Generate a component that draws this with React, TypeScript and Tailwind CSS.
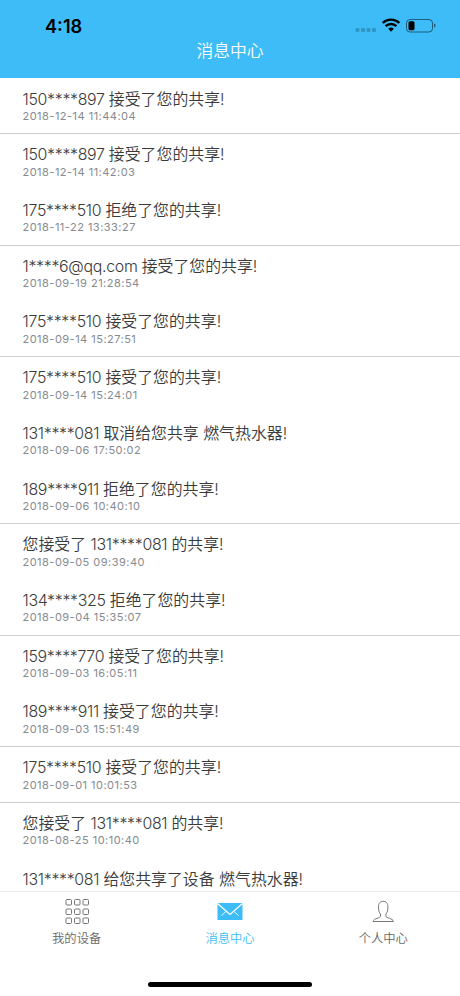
import clsx from "clsx";

const messages = [
  { account: "150****897", after: "接受了您的共享!", time: "2018-12-14 11:44:04", line: true },
  { account: "150****897", after: "接受了您的共享!", time: "2018-12-14 11:42:03" },
  { account: "175****510", after: "拒绝了您的共享!", time: "2018-11-22 13:33:27", line: true },
  { account: "1****6@qq.com", after: "接受了您的共享!", time: "2018-09-19 21:28:54" },
  { account: "175****510", after: "接受了您的共享!", time: "2018-09-14 15:27:51", line: true },
  { account: "175****510", after: "接受了您的共享!", time: "2018-09-14 15:24:01" },
  { account: "131****081", after: "取消给您共享 燃气热水器!", time: "2018-09-06 17:50:02" },
  { account: "189****911", after: "拒绝了您的共享!", time: "2018-09-06 10:40:10", line: true },
  { before: "您接受了", account: "131****081", after: "的共享!", time: "2018-09-05 09:39:40" },
  { account: "134****325", after: "拒绝了您的共享!", time: "2018-09-04 15:35:07", line: true },
  { account: "159****770", after: "接受了您的共享!", time: "2018-09-03 16:05:11" },
  { account: "189****911", after: "接受了您的共享!", time: "2018-09-03 15:51:49", line: true },
  { account: "175****510", after: "接受了您的共享!", time: "2018-09-01 10:01:53", line: true },
  { before: "您接受了", account: "131****081", after: "的共享!", time: "2018-08-25 10:10:40" },
  { account: "131****081", after: "给您共享了设备 燃气热水器!" },
];

const StatusIcons = () => {
  return (
    <svg width="84" height="18" viewBox="0 0 84 18" fill="none">
      <g fill="#000" fillOpacity="0.2">
        <rect x="1.500" y="13" width="4" height="4" rx="1" />
        <rect x="7" y="13" width="4" height="4" rx="1" />
        <rect x="12.500" y="13" width="4" height="4" rx="1" />
        <rect x="18" y="13" width="4" height="4" rx="1" />
      </g>
      <g stroke="#000" strokeWidth="2.4">
        <path d="M28.700 8a11.800 11.800 0 0 1 16.600 0" />
        <path d="M31.600 11.200a7.600 7.600 0 0 1 10.800 0" />
      </g>
      <path d="M34.200 13.800a4 4 0 0 1 5.600 0l-2.800 3z" fill="#000" />
      <rect x="52.500" y="4.500" width="26" height="12.500" rx="3.500" stroke="#000" strokeOpacity="0.5" />
      <rect x="54.500" y="6.300" width="6" height="9" rx="1.500" fill="#000" />
      <path d="M80 8.500c2 .6 2 3.400 0 4z" fill="#000" fillOpacity="0.5" />
    </svg>
  );
};

const Header = () => {
  return (
    <header className="h-[78px] shrink-0 bg-[#3dbcf8]">
      <div className="flex h-9 justify-between pt-[15px] pr-[22px] pl-[45px]">
        <span className="font-[Inter] text-[18.2px] leading-[22px] font-semibold text-black">4:18</span>
        <StatusIcons />
      </div>
      <h1 className="pt-[3px] text-center text-[16.8px] leading-6 font-[350] text-white">消息中心</h1>
    </header>
  );
};

const GridIcon = () => {
  return (
    <svg width="26" height="26" viewBox="0 0 26 26" fill="none" stroke="#777">
      {[0.5, 10, 19].map((y) =>
        [2, 10.5, 19].map((x) => <rect key={`${x}-${y}`} x={x} y={y} width="5.500" height="5.500" rx="1" />)
      )}
    </svg>
  );
};

const MailIcon = () => {
  return (
    <svg width="26" height="26" viewBox="0 0 26 26" fill="none">
      <path d="M.5 4h25v17H.5z" fill="#3dbcf8" />
      <path d="M.500 4.500L13 15.500 25.500 4.500" stroke="#fff" strokeWidth="1.2" />
      <path d="M4.500 16.500l4.500-4M21.500 16.500l-4.500-4" stroke="#fff" strokeWidth="0.9" />
    </svg>
  );
};

const PersonIcon = () => {
  return (
    <svg width="26" height="26" viewBox="0 0 26 26" fill="none" stroke="#777">
      <path d="M10.500 15C8.800 13 8.600 11 8.500 8c0-4 1.800-5.700 4.700-5.700s4.700 1.700 4.700 5.700c-.1 3-.3 5-2 7v2c0 2.500 7 2 7.600 5.500H3c.6-3.500 7.500-3 7.500-5.500z" />
    </svg>
  );
};

const tabs = [
  { label: "我的设备", icon: <GridIcon />, active: false },
  { label: "消息中心", icon: <MailIcon />, active: true },
  { label: "个人中心", icon: <PersonIcon />, active: false },
];

const App = () => {
  return (
    <div className="flex h-[996px] w-[460px] flex-col overflow-hidden bg-white font-[Inter,'Noto_Sans_CJK_SC',sans-serif]">
      <Header />
      <main className="min-h-0 flex-1 overflow-hidden pt-[0.5px]">
        {messages.map((item, i) => (
          <div
            key={i}
            className={clsx("h-[55.72px] border-b pt-[9px] pl-[22.5px]", item.line ? "border-[#d0d0d0]" : "border-transparent")}
          >
            <div className="text-[15.9px] leading-6 font-[350] whitespace-nowrap text-[#3a3a3a]">
              {item.before && `${item.before} `}
              <span className="tracking-[-0.3px]">{item.account} </span>
              {item.after}
            </div>
            {item.time && (
              <div className="-mt-[1.5px] text-[11px] leading-3 tracking-[0.48px] text-[#858a90]">{item.time}</div>
            )}
          </div>
        ))}
      </main>
      <nav className="flex h-[105px] shrink-0 flex-col border-t border-[#ebebeb] bg-white">
        <div className="grid grid-cols-3">
          {tabs.map((tab) => (
            <div key={tab.label} className="flex flex-col items-center pt-[7px]">
              {tab.icon}
              <span
                className={clsx("mt-[5px] text-[12.3px] leading-[18px] font-[350]", tab.active ? "text-[#3dbcf8]" : "text-[#666]")}
              >
                {tab.label}
              </span>
            </div>
          ))}
        </div>
        <div className="mx-auto mt-auto mb-[9px] h-[5px] w-[164px] rounded-full bg-black" />
      </nav>
    </div>
  );
};

export default App;
